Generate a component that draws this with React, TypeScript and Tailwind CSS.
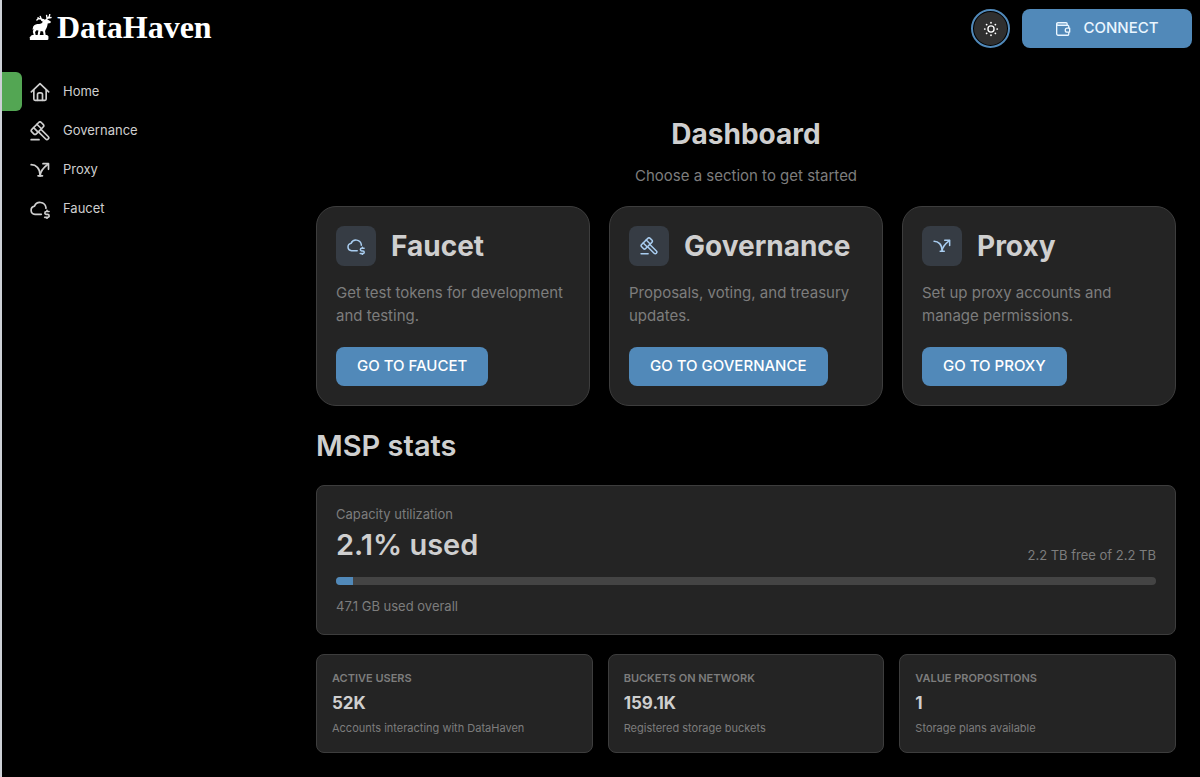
import type { ReactNode } from "react";

type IconProps = { className?: string };

function StrokeIcon({ className, children }: IconProps & { children: ReactNode }) {
  return (
    <svg
      viewBox="0 0 24 24"
      fill="none"
      stroke="currentColor"
      strokeWidth="2"
      strokeLinecap="round"
      strokeLinejoin="round"
      className={className}
      aria-hidden="true"
    >
      {children}
    </svg>
  );
}

function HomeIcon({ className }: IconProps) {
  return (
    <StrokeIcon className={className}>
      <path d="M1.6 11.8 12 2l10.4 9.8" />
      <path d="M4.6 9.4v11a1.6 1.6 0 0 0 1.6 1.6h11.6a1.6 1.6 0 0 0 1.6-1.6v-11" />
      <path d="M9 22v-7a2 2 0 0 1 2-2h2a2 2 0 0 1 2 2v7" />
    </StrokeIcon>
  );
}

function GavelIcon({ className }: IconProps) {
  return (
    <StrokeIcon className={className}>
      <g transform="translate(9 8.6) rotate(-45)">
        <rect x="-8" y="-3.8" width="16" height="7.6" rx="2.2" />
        <path d="M-2.8-3.8v7.6M2.8-3.8v7.6" />
      </g>
      <path d="m10.8 13.6 8 8a2 2 0 0 0 3-3l-8-8" />
      <path d="M1.4 22.4h9.4" />
    </StrokeIcon>
  );
}

function ProxyIcon({ className }: IconProps) {
  return (
    <StrokeIcon className={className}>
      <path d="M1.4 5.6c5.6 0 10.8 4.200 10.8 13.200" />
      <path d="M12.2 18.8c0-5.400 2.800-8.800 9.600-14" />
      <path d="M15.6 4.4h6.6v6.8" />
      <path d="M9.6 19H15" />
    </StrokeIcon>
  );
}

function FaucetIcon({ className }: IconProps) {
  return (
    <StrokeIcon className={className}>
      <path d="M13.6 18.4H6a5 5 0 0 1-.6-9.900 7.200 7.200 0 0 1 13.700 1.500v1" />
      <path d="M22.8 15h-3.200a1.750 1.750 0 0 0 0 3.500h1.600a1.750 1.750 0 0 1 0 3.500h-3.600M20.400 13.600V15M20.400 22v1.200" />
    </StrokeIcon>
  );
}

function SunIcon({ className }: IconProps) {
  return (
    <StrokeIcon className={className}>
      <circle cx="12" cy="12" r="4.6" />
      <path
        d="M12 2.6v.2M12 21.2v.2M2.6 12h.2M21.200 12h.2M5.400 5.400l.1.1M18.500 18.500l.1.1M5.400 18.600l.1-.1M18.500 5.500l.1-.1"
        strokeWidth="2.6"
      />
    </StrokeIcon>
  );
}

function WalletIcon({ className }: IconProps) {
  return (
    <StrokeIcon className={className}>
      <path d="M20.6 10V8.2a1.8 1.8 0 0 0-1.8-1.800H4.400a1.900 1.900 0 0 1 0-3.800h12.200a1.600 1.600 0 0 1 1.600 1.600v2" />
      <path d="M2.500 4.500v14.700a2.200 2.200 0 0 0 2.200 2.200h14.100a1.800 1.800 0 0 0 1.800-1.800v-2.200" />
      <path d="M22 10.800h-3.700a2.900 2.900 0 0 0 0 5.800H22z" />
    </StrokeIcon>
  );
}

// Stag standing on a plinth
function StagMark({ className }: IconProps) {
  return (
    <svg viewBox="0 0 24 28" fill="currentColor" className={className} aria-hidden="true">
      <path d="M1.4 23.2 3 22.6h15.600l1.400 1.400v3.200L19 28H0v-3z" />
      <path d="M3.6 13.4c1.200-2.200 3.800-2.600 6.400-2.600 1.600 0 3-.8 4-2.400l-2-1.200.4-1.200 2.800.6 1.600-1 2.200.2 3.600 2.400-.4 1.400-3 .6c-.2 2.200-.8 4.400-2 6.200-.2.8-.8 1.400-.8 2.200l.8 5h-2.200l-.8-4.800-2.600-.6-1.200 5.400H8.200l1-5.800-2-.2-1.600 1.800.8 4H4.400l-1.200-4.400.8-3.200-1.200 1.200z" />
      <path
        d="M15.800 7C14.200 4.600 11.400 6.400 8.600 4.200M12.400 5.600l-1.200-3M9.600 4.600 7.600 6.400M17.800 6.600c0-2.600 3.800-2.200 3.600-6M20 4.400l2.800-.6M18.600 5l-.6-3.400"
        fill="none"
        stroke="currentColor"
        strokeWidth="1.5"
        strokeLinecap="round"
      />
    </svg>
  );
}

const navItems = [
  { label: "Home", Icon: HomeIcon, active: true },
  { label: "Governance", Icon: GavelIcon, active: false },
  { label: "Proxy", Icon: ProxyIcon, active: false },
  { label: "Faucet", Icon: FaucetIcon, active: false },
];

const sections = [
  {
    title: "Faucet",
    description: "Get test tokens for development and testing.",
    action: "GO TO FAUCET",
    Icon: FaucetIcon,
  },
  {
    title: "Governance",
    description: "Proposals, voting, and treasury updates.",
    action: "GO TO GOVERNANCE",
    Icon: GavelIcon,
  },
  {
    title: "Proxy",
    description: "Set up proxy accounts and manage permissions.",
    action: "GO TO PROXY",
    Icon: ProxyIcon,
  },
];

const stats = [
  { label: "ACTIVE USERS", value: "52K", hint: "Accounts interacting with DataHaven" },
  { label: "BUCKETS ON NETWORK", value: "159.1K", hint: "Registered storage buckets" },
  { label: "VALUE PROPOSITIONS", value: "1", hint: "Storage plans available" },
];

const capacityPercent = 2.1;

function Header() {
  return (
    <header className="flex items-start justify-between pt-[9px] pr-2 pl-[27px]">
      <a href="#" className="flex items-center gap-1 text-white">
        <StagMark className="h-[26px] w-6" />
        <span className="font-['Liberation_Serif',serif] text-[32px] leading-9 font-bold">DataHaven</span>
      </a>
      <div className="flex items-center gap-3">
        <button
          aria-label="Toggle theme"
          className="flex size-[39px] items-center justify-center rounded-full border-2 border-[#5189b9] bg-black p-px text-white"
        >
          <span className="flex size-full items-center justify-center rounded-full bg-[#303030]">
            <SunIcon className="size-4" />
          </span>
        </button>
        <button className="flex h-[39px] w-[170px] items-center justify-center gap-3 rounded-lg bg-[#5189b9] text-[15px] font-medium text-[#eaf6ff]">
          <WalletIcon className="size-4" />
          CONNECT
        </button>
      </div>
    </header>
  );
}

function Sidebar() {
  return (
    <nav className="w-[290px] shrink-0 pt-6">
      {navItems.map(({ label, Icon, active }) => (
        <a key={label} href="#" className="flex h-[39px] items-center text-[13px] text-[#cfcfcf]">
          <span className={active ? "h-full w-5 rounded-r-md bg-[#53a653]" : "w-5"} />
          <Icon className="mr-[13px] ml-2 size-5" />
          {label}
        </a>
      ))}
    </nav>
  );
}

export default function App() {
  return (
    <div className="min-h-screen border-l-2 border-[#cdd0d6] bg-black font-['Inter',sans-serif] text-[#cfcfcf]">
      <Header />
      <div className="flex">
        <Sidebar />
        <main className="min-w-0 flex-1 px-6 pt-[66px] pb-6">
          <div className="text-center">
            <h1 className="text-[28px] leading-10 font-bold">Dashboard</h1>
            <p className="mt-[10px] text-[15px] leading-6 text-[#7d7d7d]">Choose a section to get started</p>
          </div>

          <div className="mt-[18px] grid grid-cols-3 gap-[19px]">
            {sections.map(({ title, description, action, Icon }) => (
              <section key={title} className="rounded-[20px] border border-[#3d3d3d] bg-[#242424] p-[19px]">
                <div className="flex items-center gap-[15px]">
                  <span className="flex size-10 items-center justify-center rounded-lg bg-[#363c44] text-[#a9cdf0]">
                    <Icon className="size-[18px]" />
                  </span>
                  <h2 className="text-[28px] leading-10 font-bold">{title}</h2>
                </div>
                <p className="mt-[15px] text-[15px] leading-[23px] text-[#7d7d7d]">{description}</p>
                <button className="mt-5 h-[39px] rounded-lg bg-[#5189b9] px-[21px] text-[15px] font-medium text-white">
                  {action}
                </button>
              </section>
            ))}
          </div>

          <h2 className="mt-5 text-[29px] leading-10 font-semibold">MSP stats</h2>

          <section className="mt-[19px] rounded-lg border border-[#3d3d3d] bg-[#242424] px-[19px] py-[18px]">
            <div className="flex items-end justify-between">
              <div>
                <p className="text-[13px] leading-5 text-[#7d7d7d]">Capacity utilization</p>
                <p className="mt-px text-[29px] leading-10 font-semibold">2.1% used</p>
              </div>
              <p className="text-[13px] leading-5 text-[#7d7d7d]">2.2 TB free of 2.2 TB</p>
            </div>
            <div className="mt-3 h-2 overflow-hidden rounded-full bg-[#444444]">
              <div className="h-full bg-[#5189b9]" style={{ width: `${capacityPercent}%` }} />
            </div>
            <p className="mt-[11px] text-[13px] leading-5 text-[#7d7d7d]">47.1 GB used overall</p>
          </section>

          <div className="mt-[19px] grid grid-cols-3 gap-[15px]">
            {stats.map(({ label, value, hint }) => (
              <section key={label} className="rounded-lg border border-[#3d3d3d] bg-[#242424] p-[15px]">
                <p className="text-[11px] leading-4 font-semibold text-[#7d7d7d]">{label}</p>
                <p className="mt-[5px] text-[17px] leading-6 font-bold">{value}</p>
                <p className="mt-1 text-[11px] leading-[18px] text-[#7d7d7d]">{hint}</p>
              </section>
            ))}
          </div>
        </main>
      </div>
    </div>
  );
}
